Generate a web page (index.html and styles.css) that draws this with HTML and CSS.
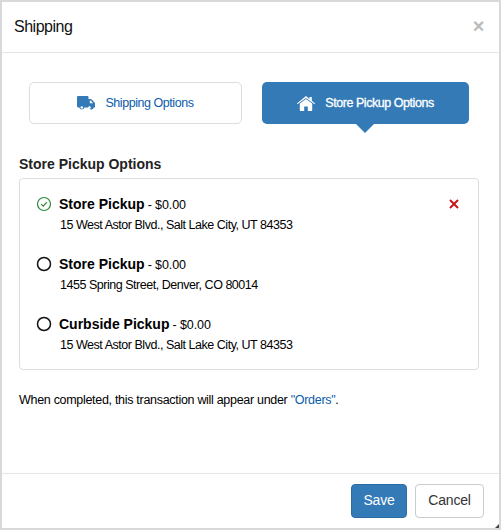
FILE: index.html
```html
<!DOCTYPE html>
<html lang="en">
<head>
    <meta charset="UTF-8">
    <title>Shipping</title>
    <link rel="stylesheet" href="styles.css">
</head>
<body>
    <div class="modal">
        <!-- Header -->
        <header class="modal-header">
            <h1>Shipping</h1>
            <span class="close">&#215;</span>
        </header>

        <!-- Body -->
        <div class="modal-body">
            <div class="tabs">
                <a class="tab tab-shipping">
                    <svg class="tab-icon truck" viewBox="0 0 18 14">
                        <path d="M0 1.2C0 .5.5 0 1.2 0h9.1c.7 0 1.2.5 1.2 1.2V3h2.2c.4 0 .8.2 1.1.5l2.7 2.9c.3.3.5.7.5 1.1V10.2c.4 0 .7.3.7.6s-.3.7-.7.7h-1.2a2.6 2.6 0 0 1-5.1 0H7.4a2.6 2.6 0 0 1-5.1 0H1.2C.5 11.500 0 11 0 10.300z"/>
                        <circle cx="4.800" cy="11.500" r="1.300" fill="#fff"/>
                        <circle cx="12.500" cy="11.500" r="1.300" fill="#fff"/>
                        <path d="M12.800 4.500h.9l2.200 2.400v.3h-3.100z" fill="#fff"/>
                    </svg>
                    Shipping Options
                </a>
                <a class="tab tab-pickup">
                    <svg class="tab-icon house" viewBox="0 0 18 15">
                        <path d="M9 0 .2 7.300c-.4.4 0 1 .5.800L9 1.900l8.300 6.200c.5.200.9-.4.5-.8L14.800 4.800V1h-2.300v1.900z"/>
                        <path d="M9 2.900 2.800 7.600V14c0 .6.400 1 1 1h3.400v-4.500h3.600V15h3.400c.6 0 1-.4 1-1V7.600z"/>
                    </svg>
                    Store Pickup Options
                </a>
            </div>

            <h2 class="section-title">Store Pickup Options</h2>

            <div class="options">
                <div class="option">
                    <svg class="radio" viewBox="0 0 16 16">
                        <circle cx="8" cy="8" r="6.500" fill="none" stroke="#2a8a34" stroke-width="1.200"/>
                        <path d="M5.200 8.200 7.200 10.200 10.900 6.100" fill="none" stroke="#2a8a34" stroke-width="1.200"/>
                    </svg>
                    <div class="option-text">
                        <div class="option-name"><b>Store Pickup</b> <span class="price">- $0.00</span></div>
                        <div class="option-address">15 West Astor Blvd., Salt Lake City, UT 84353</div>
                    </div>
                    <svg class="remove" viewBox="0 0 10 10">
                        <path d="M1 1 9 9M9 1 1 9" fill="none" stroke="#c9151b" stroke-width="2"/>
                    </svg>
                </div>
                <div class="option">
                    <svg class="radio" viewBox="0 0 16 16">
                        <circle cx="8" cy="8" r="6.500" fill="none" stroke="#111" stroke-width="1.500"/>
                    </svg>
                    <div class="option-text">
                        <div class="option-name"><b>Store Pickup</b> <span class="price">- $0.00</span></div>
                        <div class="option-address">1455 Spring Street, Denver, CO 80014</div>
                    </div>
                </div>
                <div class="option">
                    <svg class="radio" viewBox="0 0 16 16">
                        <circle cx="8" cy="8" r="6.500" fill="none" stroke="#111" stroke-width="1.500"/>
                    </svg>
                    <div class="option-text">
                        <div class="option-name"><b>Curbside Pickup</b> <span class="price">- $0.00</span></div>
                        <div class="option-address">15 West Astor Blvd., Salt Lake City, UT 84353</div>
                    </div>
                </div>
            </div>

            <p class="note">When completed, this transaction will appear under <a>"Orders"</a>.</p>
        </div>

        <!-- Footer -->
        <footer class="modal-footer">
            <button class="btn btn-primary">Save</button>
            <button class="btn">Cancel</button>
        </footer>
        <span class="grip"></span>
    </div>
</body>
</html>
```

FILE: styles.css
```css
/* Base styles */
* {
    margin: 0;
    padding: 0;
    box-sizing: border-box;
}

body {
    font-family: 'Liberation Sans', Arial, sans-serif;
    font-size: 12.5px;
    letter-spacing: -0.4px;
    color: #000;
    background-color: #fff;
}

/* Modal */
.modal {
    width: 501px;
    height: 530px;
    border: 2px solid #d9d9d9;
    display: flex;
    flex-direction: column;
    position: relative;
}

.modal-header {
    height: 51px;
    flex: none;
    padding: 0 15px 0 12px;
    border-bottom: 1px solid #e5e5e5;
    display: flex;
    align-items: center;
    justify-content: space-between;
}

.modal-header h1 {
    font-size: 16px;
    font-weight: normal;
    letter-spacing: -0.5px;
    color: #111;
}

.close {
    font-size: 20px;
    font-weight: bold;
    line-height: 1;
    color: #bbb;
    margin-bottom: 2px;
}

.modal-body {
    flex: 1;
    padding: 29px 20px 0 17px;
}

/* Tabs */
.tabs {
    display: flex;
    gap: 20px;
    padding: 0 8px 0 10px;
}

.tab {
    height: 42px;
    display: flex;
    align-items: center;
    justify-content: center;
    gap: 10px;
    border-radius: 5px;
    position: relative;
    letter-spacing: -0.45px;
}

.tab-shipping {
    width: 213px;
    border: 1px solid #ddd;
    color: #0b5cab;
}

.tab-pickup {
    width: 207px;
    background-color: #337ab7;
    color: #fff;
    -webkit-text-stroke: 0.3px #fff;
}

.tab-pickup::after {
    content: "";
    position: absolute;
    left: 94px;
    bottom: -9px;
    border-left: 9px solid transparent;
    border-right: 9px solid transparent;
    border-top: 9px solid #337ab7;
}

.tab-icon {
    fill: currentColor;
    flex: none;
}

.truck {
    width: 18px;
    height: 14px;
    fill: #337ab7;
}

.house {
    width: 18px;
    height: 15px;
}

.section-title {
    font-size: 14px;
    font-weight: bold;
    letter-spacing: 0;
    color: #222;
    margin-top: 32px;
    margin-bottom: 6px;
}

/* Options */
.options {
    height: 192px;
    border: 1px solid #ddd;
    border-radius: 4px;
    padding: 15px 16px 0 16px;
    display: flex;
    flex-direction: column;
    gap: 20px;
}

.option {
    display: flex;
    gap: 7px;
    height: 40px;
}

.radio {
    width: 16px;
    height: 16px;
    margin-top: 2px;
    flex: none;
}

.option-text {
    flex: 1;
}

.option-name {
    line-height: 20px;
}

.option-name b {
    font-size: 14px;
    letter-spacing: 0;
}

.price {
    letter-spacing: -0.1px;
}

.option-address {
    line-height: 20px;
    padding-left: 1px;
    letter-spacing: -0.47px;
}

.remove {
    width: 10px;
    height: 10px;
    margin-top: 5px;
    margin-right: 3px;
}

.note {
    margin-top: 22px;
    line-height: 16px;
    letter-spacing: -0.3px;
}

.note a {
    color: #0b5cab;
}

/* Footer */
.modal-footer {
    height: 55px;
    flex: none;
    border-top: 1px solid #e5e5e5;
    padding: 10px 15px 0 0;
    display: flex;
    justify-content: flex-end;
    gap: 8px;
}

.btn {
    width: 69px;
    height: 34px;
    padding-bottom: 2px;
    font-family: inherit;
    font-size: 14px;
    letter-spacing: -0.2px;
    color: #333;
    background-color: #fff;
    border: 1px solid #ccc;
    border-radius: 4px;
}

.btn-primary {
    width: 56px;
    color: #fff;
    background-color: #337ab7;
    border-color: #2e6da4;
}

/* Little resize corner at the bottom right */
.grip {
    position: absolute;
    right: 0;
    bottom: 0;
    border-left: 4px solid transparent;
    border-bottom: 4px solid #444;
}
```
